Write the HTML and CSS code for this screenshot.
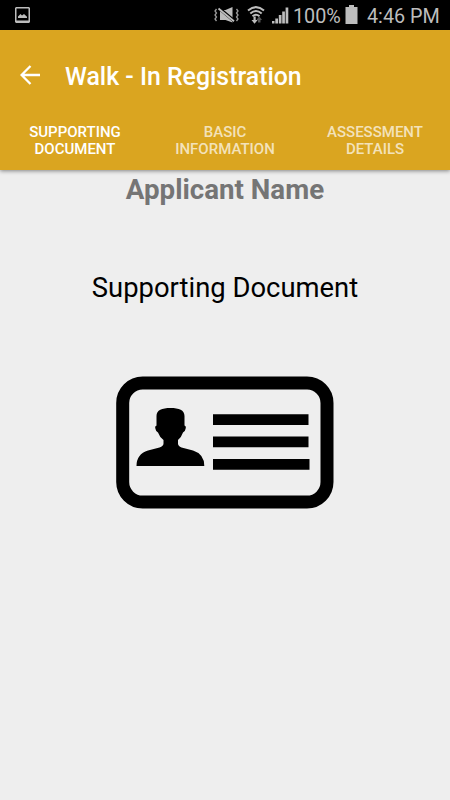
FILE: index.html
```
<!DOCTYPE html>
<html lang="en">
<head>
    <meta charset="UTF-8">
    <meta name="viewport" content="width=device-width, initial-scale=1.0">
    <title>Walk - In Registration</title>
    <link rel="stylesheet" href="styles.css">
</head>
<body>
    <div class="status-bar">
        <svg class="picture" width="15" height="16" viewBox="0 0 15 16">
            <path d="M1 0h13l1 1v14l-1 1H1l-1-1V1zM1.500 1.500v12h12v-12z" fill="#bdbdbd" fill-rule="evenodd"/>
            <path d="M3 11V9.500L5.500 7l1.500 1.500L9 7l3 2.700V11z" fill="#bdbdbd"/>
        </svg>
        <svg class="mute" width="26" height="18" viewBox="0 0 26 18">
            <path d="M2.500 3L1 5l1.500 2L1 9l1.500 2L1 13l1.500 2M22.500 3L24 5l-1.500 2L24 9l-1.500 2 1.500 2-1.500 2" fill="none" stroke="#9a9a9a" stroke-width="1.300"/>
            <path d="M6 4h5.500L18.500 1v15.500L11.500 14H6z" fill="#bdbdbd"/>
            <path d="M4.500 1.700l15.500 13" stroke="#000" stroke-width="3.200"/>
            <path d="M4.500 2.500l15.500 12.700" stroke="#bdbdbd" stroke-width="1.800"/>
        </svg>
        <svg class="wifi" width="18" height="18" viewBox="0 0 18 18">
            <path d="M1 4.500Q9-2.300 17 4.500M3.300 7.500Q9 2.500 14.700 7.500M5.500 10.200Q9 7.200 12.500 10.200" fill="none" stroke="#bdbdbd" stroke-width="2"/>
            <path d="M6.500 10.500h2.200v3.500h2L7.500 17.700l-3-3.700h2z" fill="#bdbdbd"/>
            <path d="M11 16.500V14H9.500l2.700-3.700L15 14h-1.500v2.500z" fill="#555"/>
        </svg>
        <svg class="signal" width="17" height="17" viewBox="0 0 17 17">
            <path d="M0 14h2.500v2.500H0zM3.300 11.500h2.700v5H3.300zM6.800 8h2.700v8.500H6.800zM10.200 4.500h2.700v12h-2.700zM13.600 0.500h2.700v16h-2.700z" fill="#bdbdbd"/>
        </svg>
        <span class="percent">100%</span>
        <svg class="battery" width="13" height="19" viewBox="0 0 13 19">
            <path d="M4 0h5v2h3.500v17H.5V2H4z" fill="#bdbdbd"/>
        </svg>
        <span class="time">4:46 PM</span>
    </div>

    <header class="app-bar">
        <div class="toolbar">
            <svg class="back" width="20" height="20" viewBox="0 0 20 20">
                <path d="M20 10H1.800M10.500 1L1.600 10l8.900 9" fill="none" stroke="#fff" stroke-width="2.300"/>
            </svg>
            <h1 class="title">Walk - In Registration</h1>
        </div>
        <nav class="tabs">
            <div class="tab active">SUPPORTING<br>DOCUMENT</div>
            <div class="tab">BASIC<br>INFORMATION</div>
            <div class="tab">ASSESSMENT<br>DETAILS</div>
        </nav>
    </header>

    <main class="content">
        <h2 class="applicant">Applicant Name</h2>
        <p class="label">Supporting Document</p>
        <svg class="id-card" width="218" height="133" viewBox="0 0 218 133">
            <rect x="6.700" y="7.100" width="204.300" height="119" rx="20" fill="none" stroke="#000" stroke-width="13"/>
            <path d="M40.500 50V40C40.500 34 46 32 54.500 32S68.500 34 68.500 40V49.500Q70.500 50 69.500 53Q69 56 67 56.500Q65.500 61 62 64V67.500Q62 70 65.500 71.500L77 74.500Q88.300 78 88.300 90H20.500Q20.500 78 32 74.500L43.500 71.500Q47.500 70 47.500 67.500V64Q43.500 61 42 56.500Q40 56 39.500 53Q38.500 50 40.500 49.500Z"/>
            <path d="M97 38.200h95.500v10.700H97zM97 60.500h95.500v10.700H97zM97 83h96.500v10.700H97z"/>
        </svg>
    </main>
</body>
</html>
```
FILE: styles.css
```
* {
    margin: 0;
    padding: 0;
    box-sizing: border-box;
}

body {
    height: 100vh;
    background: #eeeeee;
    font-family: Roboto, sans-serif;
    overflow: hidden;
}

svg {
    display: block;
    flex-shrink: 0;
}

/* Status bar */
.status-bar {
    display: flex;
    align-items: flex-start;
    height: 30px;
    background: #000;
    color: #bdbdbd;
    font-size: 19.8px;
    line-height: 30px;
    white-space: nowrap;
}

.picture {
    margin: 7px 0 0 15px;
}

.mute {
    margin: 6px 0 0 184px;
}

.wifi {
    margin: 6px 0 0 7px;
}

.signal {
    margin: 7px 0 0 7px;
}

.percent {
    width: 52px;
    padding-left: 4px;
    padding-top: 2px;
}

.battery {
    margin-top: 5px;
    margin-left: 4px;
}

.time {
    margin-left: 9px;
    padding-top: 2px;
}

/* App bar */
.app-bar {
    position: relative;
    height: 140px;
    background: #daa520;
    color: #fff;
    box-shadow: 0 1px 4px rgba(0, 0, 0, 0.45);
}

.toolbar {
    display: flex;
    align-items: center;
    height: 90px;
    padding-left: 20px;
}

.title {
    margin: 3px 0 0 25px;
    font-size: 24.85px;
    font-weight: 500;
    line-height: 30px;
}

.tabs {
    display: flex;
    height: 50px;
    padding-top: 4px;
}

.tab {
    flex: 1;
    font-size: 15px;
    font-weight: 500;
    line-height: 17px;
    text-align: center;
    color: rgba(255, 255, 255, 0.7);
}

.tab.active {
    color: #fff;
}

/* Content */
.content {
    display: flex;
    flex-direction: column;
    align-items: center;
}

.applicant {
    margin-top: 3px;
    font-size: 27.7px;
    font-weight: 700;
    line-height: 34px;
    color: #757575;
}

.label {
    margin-top: 64px;
    font-size: 27.4px;
    line-height: 34px;
    color: #000;
}

.id-card {
    margin-top: 71px;
}
```
